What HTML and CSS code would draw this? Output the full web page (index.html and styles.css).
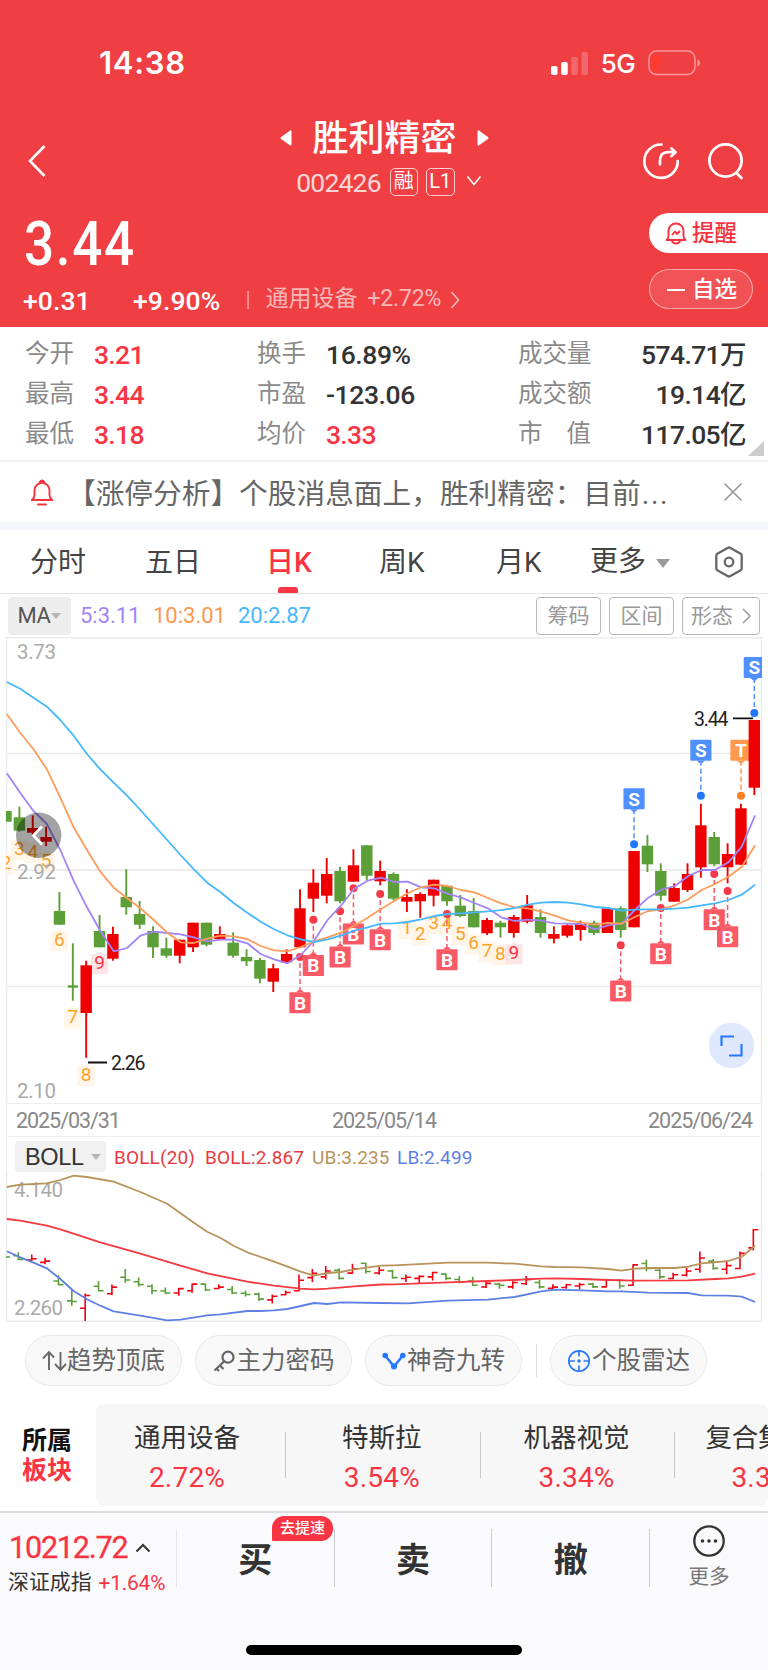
FILE: index.html
```
<!DOCTYPE html>
<html lang="zh-CN">
<head>
<meta charset="utf-8">
<title>胜利精密 002426</title>
<link rel="stylesheet" href="styles.css">
</head>
<body>
<div class="app">
  <header class="hero">
    <div class="status">
      <span class="clock">14:38</span>
      <div class="status-right">
        <svg class="signal" width="38" height="24" viewBox="0 0 38 24"><rect x="0" y="15" width="6.5" height="9" rx="1.8" fill="#fff"/><rect x="10.2" y="11" width="6.5" height="13" rx="1.8" fill="#fff"/><rect x="20.3" y="6" width="6.5" height="18" rx="1.8" fill="#fff" opacity=".22"/><rect x="30.5" y="1" width="6.5" height="23" rx="1.8" fill="#fff" opacity=".22"/></svg>
        <span class="net">5G</span>
        <svg width="53" height="26" viewBox="0 0 53 26"><rect x="1" y="1" width="46" height="23.6" rx="7.5" fill="none" stroke="#fff" stroke-opacity=".45" stroke-width="1.5"/><path d="M6.500 4.500H11V21H6.500Q3.500 21 3.500 18V7.500Q3.500 4.500 6.500 4.500Z" fill="#ff3b30"/><path d="M49.500 9Q52 10.500 52 13T49.500 17Z" fill="#fff" opacity=".5"/></svg>
      </div>
    </div>
    <div class="nav">
      <svg class="back" width="20" height="34" viewBox="0 0 20 34" fill="none" stroke="#fff" stroke-width="2.6"><path d="M17.500 2L3 17L17.500 32"/></svg>
      <div class="heading">
        <div class="name-row">
          <svg width="12" height="18" viewBox="0 0 12 18"><path d="M11.500 2.500V15.500Q11 17.500 9.500 16L1 10Q0 9 1 8L9.500 2Q11 .5 11.500 2.500Z" fill="#fff"/></svg>
          <h1>胜利精密</h1>
          <svg width="12" height="18" viewBox="0 0 12 18"><path d="M.5 2.500V15.500Q1 17.500 2.500 16L11 10Q12 9 11 8L2.500 2Q1 .5 .5 2.500Z" fill="#fff"/></svg>
        </div>
        <div class="code-row">
          <span class="code">002426</span><span class="tag">融</span><span class="tag tag-l">L1</span>
          <svg width="16" height="12" viewBox="0 0 16 12" fill="none" stroke="#fff" stroke-width="1.600"><path d="M1.500 1.500L8 9.500L14.500 1.500"/></svg>
        </div>
      </div>
      <div class="nav-icons">
        <svg width="40" height="40" viewBox="0 0 40 40" fill="none" stroke="#fff" stroke-width="2.700" stroke-linecap="round" stroke-linejoin="round"><path d="M20.500 3.500A16.700 16.700 0 1 0 36.700 20"/><path d="M19 23.500V20Q19 11.200 27 11.200H34M30.500 7.500L34.500 11.200L30.500 15"/></svg>
        <svg width="40" height="40" viewBox="0 0 40 40" fill="none" stroke="#fff" stroke-width="2.800" stroke-linecap="round"><circle cx="19.500" cy="19.500" r="16.100"/><path d="M30.500 32L35.500 37"/></svg>
      </div>
    </div>
    <div class="quote">
      <div class="quote-left">
        <div class="price">3.44</div>
        <div class="change">
          <span class="chg">+0.31</span><span class="pct">+9.90%</span><i></i><span class="ind">通用设备</span><span class="ind-pct">+2.72%</span>
          <svg width="10" height="18" viewBox="0 0 10 18" fill="none" stroke="#fff" stroke-opacity=".65" stroke-width="1.600"><path d="M1.500 1L8.500 9L1.500 17"/></svg>
        </div>
      </div>
      <div class="quote-right">
        <div class="remind">
          <svg width="22" height="23" viewBox="0 0 22 23" fill="none" stroke="#f5333f" stroke-width="1.900" stroke-linecap="round" stroke-linejoin="round"><path d="M1.500 18H20.500Q18.500 16.500 18.500 14V9A7.500 7.500 0 0 0 3.500 9V14Q3.500 16.500 1.500 18ZM7 18.500Q7.500 21.500 11 21.500T15 18.500M7.500 12.500L10 9.500L12 12L14.500 9.500"/></svg>
          <span>提醒</span>
        </div>
        <div class="watch"><b></b><span>自选</span></div>
      </div>
    </div>
  </header>

  <section class="stats">
    <div class="row"><span class="k">今开</span><span class="v up">3.21</span><span class="k">换手</span><span class="v">16.89%</span><span class="k">成交量</span><span class="v end">574.71万</span></div>
    <div class="row"><span class="k">最高</span><span class="v up">3.44</span><span class="k">市盈</span><span class="v">-123.06</span><span class="k">成交额</span><span class="v end">19.14亿</span></div>
    <div class="row"><span class="k">最低</span><span class="v up">3.18</span><span class="k">均价</span><span class="v up">3.33</span><span class="k wide"><span>市</span><span>值</span></span><span class="v end">117.05亿</span></div>
    <svg class="corner" width="16" height="15" viewBox="0 0 16 15"><path d="M16 0V15H0Z" fill="#ccc"/></svg>
  </section>

  <section class="notice">
    <svg width="22" height="27" viewBox="0 0 22 27" fill="none" stroke="#f5333f" stroke-width="1.900" stroke-linecap="round"><path d="M1 21H21Q18.500 19 18.500 16V11Q18 5 11 3.500Q4 5 3.500 11V16Q3.500 19 1 21ZM8.500 3.500Q11 -.5 13.500 3.500M7 25.500H15"/></svg>
    <p>【涨停分析】个股消息面上，胜利精密：目前<span>...</span></p>
    <svg width="20" height="20" viewBox="0 0 20 20" stroke="#999" stroke-width="1.700"><path d="M1.500 1.500L18.500 18.500M18.500 1.500L1.500 18.500"/></svg>
  </section>

  <nav class="tabs">
    <span>分时</span><span>五日</span><span class="on">日K</span><span>周K</span><span>月K</span>
    <span class="more">更多<i></i></span>
    <svg width="30" height="32" viewBox="0 0 30 32" fill="none" stroke="#666" stroke-width="2.300" stroke-linejoin="round"><path d="M14 1.800Q15 1.200 16 1.800L26.700 7.800Q27.700 8.400 27.700 9.500V22.500Q27.700 23.600 26.700 24.200L16 30.200Q15 30.800 14 30.200L3.300 24.200Q2.300 23.600 2.300 22.500V9.500Q2.300 8.400 3.300 7.800Z"/><circle cx="15" cy="16" r="4.300"/></svg>
  </nav>

  <div class="ma">
    <span class="chip">MA<i></i></span><span class="m5">5:3.11</span><span class="m10">10:3.01</span><span class="m20">20:2.87</span>
    <div class="tools"><span>筹码</span><span>区间</span><span class="shape">形态<svg width="9" height="16" viewBox="0 0 9 16" fill="none" stroke="#999" stroke-width="1.500"><path d="M1 1L8 8L1 15"/></svg></span></div>
  </div>

  <svg id="kline" class="kline" width="768" height="466" viewBox="0 637 768 466"></svg>
  <div class="dates"><span>2025/03/31</span><span>2025/05/14</span><span>2025/06/24</span></div>
  <div class="boll">
    <div class="boll-head"><span class="chip2">BOLL<i></i></span><span class="b1">BOLL(20)</span><span class="b2">BOLL:2.867</span><span class="b3">UB:3.235</span><span class="b4">LB:2.499</span></div>
    <svg id="band" width="768" height="150" viewBox="0 1172 768 150"></svg>
  </div>

  <div class="pills">
    <span><svg width="25" height="22" viewBox="0 0 25 22" fill="none" stroke="#666" stroke-width="1.900"><path d="M7 20V2.500M1 8.500L7 2.200L12 7.500M18.500 2V19.500M13 14L18.500 19.800L24 14"/></svg>趋势顶底</span>
    <span><svg width="24" height="22" viewBox="0 0 24 22" fill="none" stroke="#666" stroke-width="2.200"><circle cx="15" cy="7.200" r="5.500"/><path d="M11 11.500L1.500 20.500M7 15.500L10.500 19M3.500 18.500L6 21"/></svg>主力密码</span>
    <span><svg width="25" height="20" viewBox="0 0 25 20"><path d="M3.500 5L12 15.500L20.500 5" fill="none" stroke="#2878ff" stroke-width="2.500"/><circle cx="3.200" cy="4.500" r="2.800" fill="#2878ff"/><circle cx="12" cy="15.300" r="3.100" fill="#2878ff"/><circle cx="20.800" cy="4.500" r="2.800" fill="#2878ff"/></svg>神奇九转</span>
    <i></i>
    <span><svg width="25" height="24" viewBox="0 0 25 24" fill="none" stroke="#2878ff" stroke-width="1.700"><circle cx="12" cy="12" r="10.200"/><path d="M12 1.500V7.500M12 16.500V22.500M2 12H8M16.500 12H22"/><circle cx="12" cy="12" r="1.800" fill="#2878ff" stroke="none"/></svg>个股雷达</span>
  </div>

  <section class="sector">
    <div class="sector-title"><b>所属</b><b class="up">板块</b></div>
    <div class="sector-list">
      <div><span>通用设备</span><em>2.72%</em></div>
      <div><span>特斯拉</span><em>3.54%</em></div>
      <div><span>机器视觉</span><em>3.34%</em></div>
      <div class="cut"><span>复合集</span><em>3.3</em></div>
    </div>
  </section>

  <footer class="bottom">
    <div class="bar">
      <div class="index">
        <div class="iv">10212.72<svg width="16" height="10" viewBox="0 0 16 10" fill="none" stroke="#333" stroke-width="2"><path d="M1.500 8.500L8 2L14.500 8.500"/></svg></div>
        <div class="in"><span>深证成指</span><em>+1.64%</em></div>
      </div>
      <div class="act">买<span class="badge">去提速</span></div>
      <div class="act">卖</div>
      <div class="act">撤</div>
      <div class="other">
        <svg width="32" height="32" viewBox="0 0 32 32"><circle cx="16" cy="16" r="14.700" fill="none" stroke="#333" stroke-width="2.300"/><circle cx="9.500" cy="16" r="1.800" fill="#333"/><circle cx="16" cy="16" r="1.800" fill="#333"/><circle cx="22.500" cy="16" r="1.800" fill="#333"/></svg>
        <span>更多</span>
      </div>
    </div>
    <div class="home"></div>
  </footer>
</div>
<script src="chart.js"></script>
</body>
</html>
```

FILE: styles.css
```
* { box-sizing: border-box; }
body { margin: 0; background: #fff; font-family: Roboto, "Noto Sans CJK SC", sans-serif; color: #333; }
svg { display: block; flex: none; }
h1, p { margin: 0; font-weight: 400; }
em, i { font-style: normal; }
.app { width: 768px; height: 1670px; overflow: hidden; display: flex; flex-direction: column; }
.app > * { flex: none; }
.up { color: #f93443; }

.hero { height: 327px; background: #f03f42; color: #fff; display: flex; flex-direction: column; }
.status { height: 110px; padding: 50px 67px 0 99px; display: flex; justify-content: space-between; }
.clock { font: 600 31px/26px Inter, sans-serif; letter-spacing: .7px; }
.status-right { display: flex; align-items: center; height: 26px; }
.net { font: 500 26px/26px Inter, sans-serif; margin: 2px 13px 0 12px; letter-spacing: -.6px; }
.nav { height: 90px; display: flex; justify-content: space-between; padding: 0 25px 0 27px; }
.back { margin-top: 34px; }
.heading { display: flex; flex-direction: column; align-items: center; margin-left: 81px; }
.name-row { display: flex; align-items: center; gap: 20px; height: 56px; }
.name-row h1 { font-size: 36px; line-height: 56px; font-weight: 500; padding-top: 2px; }
.code-row { display: flex; align-items: center; height: 32px; margin: -1px 0 0 9px; }
.code { font-size: 26.500px; letter-spacing: -.8px; opacity: .78; line-height: 32px; padding-top: 3px; }
.tag { margin-left: 9px; width: 28px; height: 28px; border: 1.500px solid rgba(255,255,255,.75); border-radius: 5px; font-size: 20px; line-height: 25px; text-align: center; margin-top: 1px; }
.tag-l { margin-left: 8px; width: 29px; font-size: 20px; line-height: 25px; margin-right: 11px; }
.nav-icons { display: flex; gap: 25px; padding-top: 31px; margin-right: -3px; }
.quote { display: flex; justify-content: space-between; flex: 1; }
.price { font-size: 62px; line-height: 62px; font-weight: 500; letter-spacing: 2px; margin: 13px 0 0 24px; width: 140px; transform: scaleX(.855); transform-origin: 0 0; }
.change { display: flex; align-items: center; height: 30px; margin-top: 10px; padding-left: 23px; }
.chg, .pct { font-size: 26.500px; font-weight: 500; width: 110px; letter-spacing: .1px; padding-top: 1px; }
.pct { width: 114px; }
.change i { width: 1.500px; height: 18px; background: rgba(255,255,255,.4); margin-right: 17px; }
.ind { font-size: 23px; width: 102px; opacity: .62; line-height: 28px; height: 30px; }
.ind-pct { font-size: 23px; width: 82px; opacity: .62; letter-spacing: -.2px; line-height: 28px; height: 30px; }
.quote-right { width: 119px; padding-top: 13px; font-size: 22.500px; font-weight: 500; }
.remind { height: 40px; background: #fff; color: #f5333f; border-radius: 20px 0 0 20px; display: flex; align-items: center; padding-left: 16px; gap: 5px; line-height: 40px; }
.watch { height: 40px; width: 104px; margin-top: 16px; border: 1px solid rgba(255,255,255,.5); border-radius: 20px; background: rgba(255,255,255,.1); display: flex; align-items: center; padding-left: 17px; gap: 7px; line-height: 38px; }
.watch b { width: 18px; height: 2px; background: #fff; margin-top: 2px; }

.stats { height: 135px; padding-top: 7px; border-bottom: 2px solid #f0f0f0; position: relative; }
.row { height: 40px; display: grid; grid-template-columns: 69px 163px 69px 192px 91px 137px; padding-left: 25px; align-items: center; }
.k { font-size: 24.500px; line-height: 40px; color: #8a8a8a; }
.k.wide { display: flex; justify-content: space-between; width: 73px; }
.v { font-size: 26.500px; line-height: 38px; font-weight: 500; color: #333; letter-spacing: -.4px; padding-top: 2px; height: 40px; }
.v.up { color: #f93443; letter-spacing: -.7px; }
.end { text-align: right; letter-spacing: -.6px; }
.corner { position: absolute; right: 4px; bottom: 4px; }

.notice { height: 60px; display: flex; align-items: center; padding: 0 25px 0 31px; }
.notice p { font-size: 28.700px; line-height: 60px; color: #666; margin-left: 14px; flex: 1; white-space: nowrap; padding-top: 2px; height: 60px; }
.notice p span { letter-spacing: 1.600px; margin-left: 1px; }
.tabs { height: 72px; border-top: 8px solid #f3f5fa; border-bottom: 1.500px solid #e4e4e4; display: grid; grid-template-columns: 115px 121px 113px 117px 94px 125px 30px; padding-left: 30px; align-items: center; font-size: 28px; line-height: 62px; color: #444; }
.tabs span { padding-top: 1px; height: 62px; }
.tabs svg { margin-left: -1px; }
.tabs .on { color: #f93443; font-weight: 500; position: relative; }
.on::after { content: ""; position: absolute; left: 12px; bottom: 0; width: 20px; height: 6px; border-radius: 3px 3px 1px 1px; background: #f93443; }
.more { display: flex; align-items: center; }
.more i { margin: 2px 0 0 10px; border: 7px solid transparent; border-top: 9px solid #999; border-bottom: 0; }

.ma { height: 43px; display: flex; align-items: center; padding: 0 8px; font-size: 22px; font-weight: 400; }
.chip { width: 63px; height: 38px; line-height: 39px; background: #ededed; border-radius: 4px; display: flex; align-items: center; justify-content: center; gap: 1px; color: #555; font-weight: 400; letter-spacing: -.5px; }
.chip i { border: 5px solid transparent; border-top: 6px solid #b5b5b5; border-bottom: 0; }
.m5 { color: #a284f5; margin-left: 9px; width: 73px; }
.m10 { color: #ff9650; width: 85px; }
.m20 { color: #45b8ff; }
.tools { margin-left: auto; display: flex; gap: 8px; color: #999; font-size: 21px; }
.tools span { width: 65px; height: 38px; line-height: 36px; border: 1.500px solid #b5b5b5; border-radius: 4px; text-align: center; }
.tools .shape { width: 78px; display: flex; align-items: center; justify-content: center; gap: 9px; }
.ma span { white-space: nowrap; }

.dates { height: 34px; margin: 0 6px; border: solid #eee; border-width: 1.500px 1.500px 1.500px; display: flex; justify-content: space-between; padding: 2px 9px 0 9px; font-size: 21.500px; line-height: 30px; color: #888; letter-spacing: -1.050px; }
.boll { height: 185px; }
.boll-head { height: 35px; margin: 0 6px; border: solid #eee; border-width: 0 1.500px; display: flex; align-items: center; padding-left: 8px; font-size: 19px; font-weight: 400; padding-top: 4px; letter-spacing: .15px; }
.chip2 { width: 91px; height: 31px; background: #f0f0f0; border-radius: 4px; font: 400 23.500px/31px "Liberation Sans", sans-serif; display: flex; align-items: center; padding-left: 10px; letter-spacing: -.3px; }
.chip2 i { margin-left: 7px; border: 5px solid transparent; border-top: 6px solid #b5b5b5; border-bottom: 0; }
.b1, .b2 { color: #e83a3f; } .b1 { width: 91px; margin-left: 8px; } .b2 { width: 107px; }
.b3 { color: #b8935a; width: 85px; } .b4 { color: #5f80e3; }
.boll-head span { white-space: nowrap; padding-top: 1px; }

.pills { height: 82px; padding: 13px 0 0 25px; display: flex; gap: 13px; }
.pills span { width: 157px; height: 51px; border: 1.500px solid #e9e9e9; border-radius: 25px; background: #f8f8f8; display: flex; align-items: center; justify-content: center; font-size: 24.500px; line-height: 50px; color: #666; white-space: nowrap; }
.pills i { width: 1px; height: 33px; margin: 9px 0 0 1px; background: #ddd; }
.sector { height: 102px; display: flex; }
.sector-title { width: 96px; padding: 22px 0 0 22px; display: flex; flex-direction: column; font-size: 25px; line-height: 30px; color: #111; }
.sector-title b { font-weight: 700; }
.sector-title .up { color: #f93443; }
.sector-list { flex: 1; background: #f7f7f7; border-radius: 7px; display: flex; overflow: hidden; }
.sector-list div { width: 194.700px; flex: none; text-align: center; display: flex; flex-direction: column; position: relative; padding: 13px 3px 0 0; font-size: 26.500px; line-height: 42px; }
.sector-list div:first-child { width: 190px; padding-right: 8px; }
.sector-list em { color: #f93443; font-size: 28px; line-height: 38px; font-weight: 400; letter-spacing: .2px; }
.sector-list div:not(.cut)::after { content: ""; position: absolute; right: 0; top: 28px; width: 1px; height: 46px; background: #c8c8c8; }
.sector-list .cut { text-align: left; padding-left: 30px; white-space: nowrap; }
.cut em { padding-left: 26px; }

.bottom { margin-top: 5px; height: 159px; background: #fafafd; border-top: 2px solid #dcdcdc; display: flex; flex-direction: column; justify-content: space-between; align-items: center; }
.bar { width: 768px; padding-top: 16px; display: flex; }
.index { width: 177px; height: 58px; border-right: 1px solid #e6e6e6; padding-left: 8px; }
.iv { font-size: 30.500px; line-height: 38px; height: 38px; color: #f93443; display: flex; align-items: center; gap: 8px; letter-spacing: -1.200px; margin-left: 1px; font-weight: 400; -webkit-text-stroke: .3px #f93443; }
.in { display: flex; font-size: 20.900px; line-height: 31px; white-space: nowrap; gap: 7px; }
.in em { color: #f93443; letter-spacing: -.2px; padding-top: 1px; }
.act { width: 157.700px; height: 58px; border-right: 1.500px solid #ccc; text-align: center; font-size: 34px; line-height: 62px; font-weight: 700; position: relative; }
.badge { position: absolute; left: 95px; top: -13px; width: 61px; height: 25px; border-radius: 12px 12px 12px 1px; background: #f93443; color: #fff; font-size: 15px; line-height: 25px; font-weight: 500; }
.other { flex: 1; display: flex; flex-direction: column; align-items: center; font-size: 20.500px; line-height: 41px; height: 73px; color: #777; margin: -4px 0 -11px; }
.home { width: 276px; height: 10px; border-radius: 5px; background: #000; margin-bottom: 15px; }

.grid { stroke: #ececec; fill: none; }
.line { fill: none; stroke-width: 1.800px; stroke-linejoin: round; }
.axis { font-size: 20.500px; fill: #aaa; }
.turn { font-size: 19px; text-anchor: middle; }
.flag { font-size: 19px; font-weight: 700; fill: #fff; text-anchor: middle; }
.note { font-size: 19.500px; fill: #222; }
```

FILE: chart.js
```
const RED = '#ee0000', GREEN = '#5c9e38';
const X = i => 6 + 13.363 * i;
// each candle: direction, high, body top, body bottom, low (chart y units)
const candles = [
['g',811,811,821.7,821.7],['g',806.7,817.3,830.7,831.7],['r',815.3,828,832.7,834.7],['r',826.7,837,841.7,846],
['g',892,911,924.7,924.7],['g',943.3,985.3,987.7,1000.7],['r',960.7,965.3,1013,1057.7],['g',915,931,947.3,947.3],
['r',926.7,934,958.7,960.7],['g',869.3,897,907.3,914.7],['g',901,914,924.7,929],['g',926.3,931,947.3,958],
['g',937.7,948.3,955.7,957.7],['r',939.7,939.7,955.7,963.3],['r',922.7,922.7,947.3,952],['g',922.7,922.7,944.7,946.3],
['r',926.3,934,939,939],['g',932.3,942.7,955.7,957.7],['g',949.3,957,961.3,966],['g',958,960,978.7,983.3],
['r',963.7,968.3,981.7,992],['r',949.3,954,962.3,962.3],['r',889.3,908.3,947.3,947.3],['r',869.3,882.7,898.7,912],
['r',858,874,895.7,903.3],['g',866.7,871,901.3,903.3],['r',849.3,865.3,881.7,881.7],['g',845.3,845.3,875.7,880.7],
['r',860.7,871,881.3,885.3],['g',872.3,874,898.7,900.3],['r',889.3,897,901.7,912],['r',892.3,894,901.3,917.7],
['r',879.7,879.7,895.7,906.3],['g',885.7,885.7,901.3,905.7],['g',895,905.7,916,917.3],['g',898,911,927.3,927.3],
['r',918,920,933.3,935],['g',920.7,922.7,927.3,937.7],['r',915,917,933,937.7],['r',895,905.3,921.7,923.3],
['g',909.3,917,933,937.7],['r',926.3,934,938.7,943.3],['r',924.3,925.3,935.7,937.7],['r',920.7,924,930,940.7],
['g',920.7,922.7,933,935],['r',908.3,908.3,933,933],['g',906.3,908.3,930,937.7],['r',851,851,927.3,927.3],
['g',835,845.7,864.3,872],['g',863.3,871,895.7,900.7],['r',883.3,888,901.7,901.7],['r',863.3,874,890,892],
['r',803.7,825.3,867.3,877.7],['g',832,837,864.3,866.3],['r',843.3,854,867.3,883.3],['r',803.7,808.3,864.7,864.7],
['r',720,720,787.7,795]];
const ma20 = [682,688.7,697.7,706.7,720,735.7,754,769.3,782.7,795.7,810,825,840,855,869.3,882.7,892.3,903.3,912.7,921.7,929.3,935.3,939.3,942,939.3,935.7,930.7,927.3,923.7,923.3,922,919.3,916,914,913.3,912.3,911.3,910.2,908,904.7,902.7,902,902.7,904.3,907,908,910.7,909.7,909.3,909.3,908.7,907.7,905.3,903.3,900,894.7,884.7];
const ma10 = [714,732.7,749.3,769.3,797.7,827.3,850,871.7,887.7,898.3,908.3,920,932.7,942.3,943,938.7,935.7,936.3,939,946,950.3,951.3,947,941.3,937.3,932.7,925.7,917.7,909,901,893.3,887.3,884.7,886,890,892.3,898,903.3,907.3,908.3,911.7,915.7,920.3,922.7,924.7,923,923.7,917,911,909.3,905.3,899.3,890,884,876.7,866.7,845.3];
const ma5 = [773.3,792.7,811,824,850,880.7,907.3,930.7,951.3,948,935.7,931.7,933,934.3,937.3,941.3,939.7,939.7,943.3,954,959.3,963.3,955,940.7,920,905.7,888.7,880.7,877.7,882,881.7,887.3,888.3,893.7,897.7,903,908.3,917.3,921,919.7,920.7,923.3,923.7,924,929.3,925.3,923.7,910,897.7,889.7,886,876,870,870,862.3,846.7,815.3];
// marker: kind, candle index, dot y
const marks = [['B',22,957],['B',23,919.7],['B',25,911.3],['B',26,888.3],['B',28,894],['B',33,914],['B',46,945.3],['B',49,908],['B',53,874],['B',54,891],['S',47,844.3],['S',52,795.7],['S',56,713],['T',55,795.7]];
// nine-turn count: candle index, digit, baseline
const turns = [[0,2,869],[1,3,855],[2,4,857.7],[3,5,867.3],[4,6,946],[5,7,1023.3],[6,8,1080.7],[7,9,968.7],[30,1,934],[31,2,940.3],[32,3,929],[33,4,929.3],[34,5,940.3],[35,6,949],[36,7,957],[37,8,960],[38,9,959]];
// band lines as [candle index, y]
const ub = [[0,1187],[1,1184.7],[3,1183.3],[4,1180],[5,1175.7],[6,1177],[8,1181.7],[10,1192],[12,1203.7],[14,1222.7],[15,1231.7],[16,1238],[17,1246],[18,1252.3],[20,1261.7],[22,1271.7],[23,1275.7],[24,1273],[25,1272],[26,1269.3],[28,1265.7],[29,1265.3],[33,1262.7],[36,1262.7],[38,1263.7],[40,1266.3],[41,1267],[43,1267.3],[45,1269],[46,1270.7],[47,1268.7],[48,1268],[50,1268],[51,1266.7],[52,1263.3],[54,1261],[55,1256.7],[56,1245.7]];
const mb = [[0,1219],[1,1220.7],[3,1225.7],[4,1229.3],[5,1233.7],[7,1242.3],[10,1253.7],[13,1265.7],[15,1273.3],[18,1281.7],[20,1285.7],[22,1288.7],[23,1289.3],[24,1288.7],[26,1286.3],[28,1284.5],[29,1284.3],[33,1282.3],[36,1281],[38,1280],[40,1278.7],[41,1278.3],[43,1279],[45,1280],[47,1280.7],[51,1280.3],[53,1279],[54,1278.3],[55,1276.7],[56,1273.7]];
const lb = [[0,1251.3],[1,1257.3],[2,1262.7],[3,1268.3],[4,1279],[5,1291],[6,1299.3],[7,1305.7],[8,1311.3],[10,1315.7],[12,1320.3],[13,1319.7],[15,1315.3],[16,1314.3],[18,1311],[19,1311],[20,1310.3],[21,1309],[23,1303],[24,1304],[25,1302.3],[28,1303],[30,1303.3],[33,1300.7],[36,1299.7],[38,1297],[40,1291.3],[41,1289.7],[43,1290.3],[45,1291.3],[46,1291.3],[48,1292.7],[51,1293],[52,1295.3],[54,1295.7],[55,1296.7],[56,1302]];

const line = (pts, color) => `<polyline class="line" stroke="${color}" points="${pts.map(([i, y]) => (X(i) + .8).toFixed(1) + ',' + y).join(' ')}"/>`;
const rows = a => a.map((y, i) => [i, y]);

function turn([i, n, b]) {
  const x = X(i), hot = n === 9, box = hot ? '#ffdfe1' : '#fff3e4';
  return `<path d="M${x - 8.7} ${b - 14.700}H${x - 3}L${x} ${b - 17}L${x + 3} ${b - 14.700}H${x + 8.7}V${b + 5.3}H${x - 8.7}Z" fill="${box}" opacity=".85"/><text class="turn" x="${x}" y="${b}" fill="${hot ? '#f93443' : '#f9a32b'}">${n}</text>`;
}
function mark([k, i, y]) {
  const x = X(i), up = k !== 'B', c = { B: '#fa5a66', S: '#4f90ff', T: '#ff974d' }[k], d = { B: '#f63a48', S: '#2277ff', T: '#ff8020' }[k];
  const top = up ? y - 56 : y + 35.3, s = up ? -1 : 1, edge = up ? top + 21 : top;
  return `<path d="M${x} ${y + 6 * s}V${y + 32 * s}" stroke="${c}" stroke-width="1.500" stroke-dasharray="5 3"/>
  <rect x="${x - 10.600}" y="${top}" width="21.200" height="21" rx="1" fill="${c}"/><path d="M${x - 4} ${edge}L${x} ${edge - 3.500 * s}L${x + 4} ${edge}Z" fill="${c}"/>
  <text class="flag" x="${x}" y="${top + 17.300}">${k}</text><circle cx="${x}" cy="${y}" r="4" fill="${d}"/>`;
}
function candle([t, h, a, b, l], i) {
  const x = X(i), c = t === 'r' ? RED : GREEN, w = i === 5 ? 5 : 5.7;
  return `<path d="M${x} ${h}V${l}" stroke="${c}" stroke-width="1.900"/><rect x="${x - w}" y="${a}" width="${2 * w}" height="${b - a}" fill="${c}"/>`;
}
function bar([t, h, a, b, l], i) {
  const m = y => 1229.7 + (y - 720) * .2683, x = X(i) - 1, o = m(t === 'r' ? b : a), c = m(t === 'r' ? a : b);
  return `<path d="M${x} ${m(h) - .7}V${m(l) + .7}M${x - 5} ${o}H${x}M${x} ${c}H${x + 5}" fill="none" stroke="${t === 'r' ? '#f00010' : GREEN}" stroke-width="1.600"/>`;
}

document.getElementById('kline').innerHTML = `
<defs><clipPath id="c"><rect x="6" y="637" width="756" height="466"/></clipPath></defs>
<path class="grid" stroke-width="1.500" d="M6.500 1103V637.800H761.500V1103M6 753.500H762M6 986.500H762"/><path class="grid" stroke-width="2" d="M6 870H762"/>
<g clip-path="url(#c)">${turns.map(turn).join('')}${marks.map(mark).join('')}${candles.map(candle).join('')}
${line(rows(ma5), '#a284f5')}${line(rows(ma10), '#ff9c5b')}${line(rows(ma20), '#45b8ff')}</g>
<text class="axis" x="17" y="658.500" textLength="39">3.73</text><text class="axis" x="17" y="878.500" textLength="39">2.92</text><text class="axis" x="17" y="1097.500" textLength="39">2.10</text>
<path d="M88 1062.500H107M733 718.300H753" stroke="#111" stroke-width="1.800"/>
<text class="note" x="111" y="1070" textLength="34.500">2.26</text><text class="note" x="694" y="725.500" textLength="34.500">3.44</text>
<circle cx="38.700" cy="835.300" r="22.700" fill="#000" opacity=".36"/><path d="M42 826.500L33.500 835.500L42 844.500" fill="none" stroke="#fff" stroke-width="2.800"/>
<circle cx="731.500" cy="1045.500" r="22.700" fill="#dfe8fd"/><path d="M721.500 1046V1036.500H734M741.500 1044V1055.500H729" fill="none" stroke="#2878ff" stroke-width="2.200"/>`;

document.getElementById('band').innerHTML = `
<defs><clipPath id="d"><rect x="6" y="1172" width="756" height="150"/></clipPath></defs>
<path class="grid" stroke-width="1.500" d="M6.500 1172V1321.300H761.500V1172"/>
<g clip-path="url(#d)"><text class="axis" x="14" y="1197" textLength="49">4.140</text><text class="axis" x="14" y="1314.500" textLength="49">2.260</text>
${candles.map(bar).join('')}${line(ub, '#b8935a')}${line(mb, '#f23a40')}${line(lb, '#5f80e3')}</g>`;
```
